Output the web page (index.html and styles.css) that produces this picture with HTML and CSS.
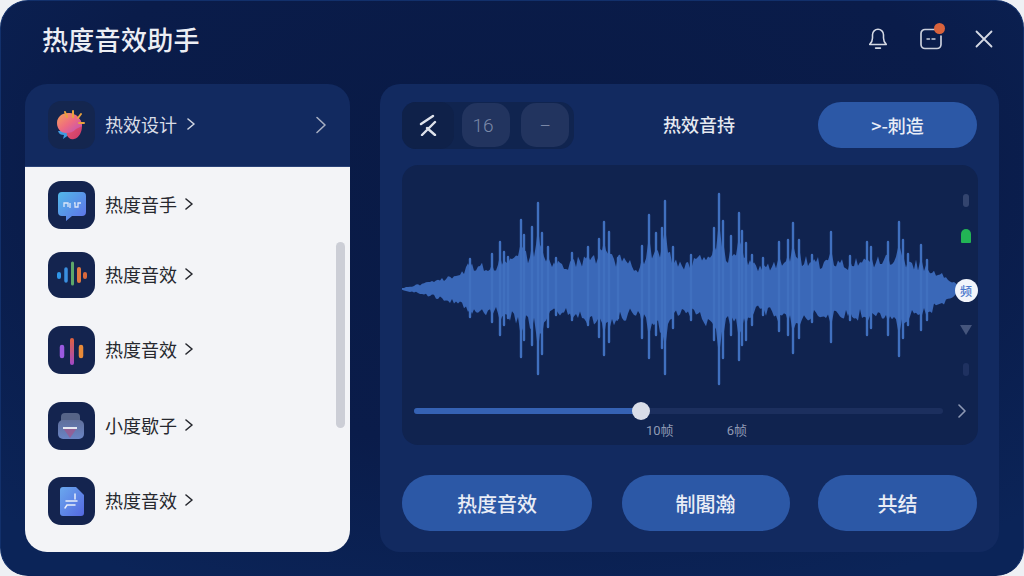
FILE: index.html
```html
<!DOCTYPE html>
<html lang="zh">
<head>
<meta charset="utf-8">
<title>热度音效助手</title>
<link rel="stylesheet" href="styles.css">
</head>
<body>
<div class="app">
  <header class="topbar">
    <h1 class="title">热度音效助手</h1>
    <div class="top-icons">
      <svg class="ti bell" viewBox="0 0 24 26" fill="none" stroke="#d5d9e4" stroke-width="1.7" stroke-linecap="round" stroke-linejoin="round"><path d="M3 20c2-2 3-3.500 3-7V9.500a6 6 0 0 1 12 0V13c0 3.500 1 5 3 7z"/><path d="M9.500 24h5" stroke-width="2"/></svg>
      <span class="msg">
        <svg class="ti" viewBox="0 0 24 22" fill="none" stroke="#c9cedb" stroke-width="1.7" stroke-linecap="round"><path d="M16 1.500H6a4 4 0 0 0-4 4v11a4 4 0 0 0 4 4h12a4 4 0 0 0 4-4V8"/><path d="M8 11h2.500M13 11h3" stroke-width="1.400"/></svg>
        <i class="dot"></i>
      </span>
      <svg class="ti close" viewBox="0 0 18 18" fill="none" stroke="#d5d9e4" stroke-width="1.800" stroke-linecap="round"><path d="M1.500 1.500l15 15M16.500 1.500l-15 15"/></svg>
    </div>
  </header>
  <main class="main">
    <aside class="side">
      <div class="side-head">
        <span class="ico ico-head">
          <svg viewBox="0 0 46 48" width="46" height="48">
            <defs>
              <linearGradient id="g1" x1="0" y1="0" x2="1" y2="1"><stop offset="0" stop-color="#f5a35a"/><stop offset=".5" stop-color="#ee6a80"/><stop offset="1" stop-color="#b94fc0"/></linearGradient>
              <linearGradient id="g2" x1="0" y1="0" x2="1" y2="1"><stop offset="0" stop-color="#ee5a70"/><stop offset="1" stop-color="#c83a6a"/></linearGradient>
            </defs>
            <path d="M10 30c1 3 3 4 6 4l-1 4 7-5-4-3z" fill="#3f9be0"/>
            <path d="M22 26c3-1 5-6 8-8 2-1 4 3 4 7 0 6-3 12-8 13-3 1-6-1-7-4-1-3 1-6 3-8z" fill="url(#g2)"/>
            <path d="M9 22c0-6 5-10 11-10 5 0 9 2 11 5 2 3 3 6 3 8l-6 3c-3 3-6 4-10 4-5 0-9-4-9-10z" fill="url(#g1)"/>
            <path d="M17 11l2 5M25 10v6M33 13l-3 4M36 22h-5" stroke="#e8a23c" stroke-width="2" stroke-linecap="round"/>
          </svg>
        </span>
        <span class="side-label">热效设计</span>
        <svg class="chev chev-sm head-chev light" viewBox="0 0 8 12"><path d="M1 1l6 5-6 5"/></svg>
        <svg class="chev chev-end" viewBox="0 0 12 18"><path d="M2 1.500l8 7.500-8 7.500"/></svg>
      </div>
      <ul class="list">
        <li class="row">
          <span class="ico">
            <svg viewBox="0 0 48 48" width="48" height="48">
              <defs><linearGradient id="g3" x1="0" y1="0" x2="1" y2="1"><stop offset="0" stop-color="#52b8e8"/><stop offset="1" stop-color="#5f6fe8"/></linearGradient></defs>
              <path d="M14 11h20a4 4 0 0 1 4 4v16a4 4 0 0 1-4 4H24l-6 5v-5h-4a4 4 0 0 1-4-4V15a4 4 0 0 1 4-4z" fill="url(#g3)"/>
              <path d="M16 26v-4h4v4M22 22v5M26 22h1v4h3v-4h3" fill="none" stroke="#dbe6f8" stroke-width="1.300"/>
            </svg>
          </span>
          <span class="row-label">热度音手</span>
          <svg class="chev chev-sm" viewBox="0 0 8 12"><path d="M1 1l6 5-6 5"/></svg>
        </li>
        <li class="row row-tight">
          <span class="ico">
            <svg viewBox="0 0 48 46" width="48" height="46" stroke-linecap="round" fill="none">
              <path d="M11 22v3" stroke="#2f96e8" stroke-width="4"/>
              <path d="M18 17v12" stroke="#3a8fe0" stroke-width="3.500"/>
              <path d="M24.500 11v21" stroke="#5ca86a" stroke-width="3"/>
              <path d="M31 17v12" stroke="#e07840" stroke-width="4"/>
              <path d="M37 22v3" stroke="#d8683c" stroke-width="4"/>
            </svg>
          </span>
          <span class="row-label">热度音效</span>
          <svg class="chev chev-sm" viewBox="0 0 8 12"><path d="M1 1l6 5-6 5"/></svg>
        </li>
        <li class="row">
          <span class="ico">
            <svg viewBox="0 0 48 48" width="48" height="48" stroke-linecap="round" fill="none">
              <defs><linearGradient id="g4" x1="0" y1="0" x2="0" y2="1"><stop offset="0" stop-color="#e0623c"/><stop offset="1" stop-color="#a048c8"/></linearGradient></defs>
              <path d="M14 21v9" stroke="#9a5ae0" stroke-width="4.500"/>
              <rect x="22" y="12" width="4" height="27" rx="2" fill="url(#g4)"/>
              <path d="M33 21v9" stroke="#e88a38" stroke-width="4.500"/>
            </svg>
          </span>
          <span class="row-label">热度音效</span>
          <svg class="chev chev-sm" viewBox="0 0 8 12"><path d="M1 1l6 5-6 5"/></svg>
        </li>
        <li class="row">
          <span class="ico">
            <svg viewBox="0 0 48 48" width="48" height="48">
              <defs><linearGradient id="g5" x1="0" y1="0" x2="0" y2="1"><stop offset="0" stop-color="#5f6f9c"/><stop offset="1" stop-color="#6a84c4"/></linearGradient></defs>
              <rect x="13" y="11" width="19" height="14" rx="4" fill="#566487"/>
              <rect x="10" y="18" width="26" height="19" rx="5" fill="url(#g5)"/>
              <path d="M15 26h14l-7 10z" fill="#a2558c" opacity=".7"/>
              <rect x="15" y="25" width="14" height="2" fill="#e4e8f2"/>
            </svg>
          </span>
          <span class="row-label">小度歇子</span>
          <svg class="chev chev-sm" viewBox="0 0 8 12"><path d="M1 1l6 5-6 5"/></svg>
        </li>
        <li class="row row-last">
          <span class="ico">
            <svg viewBox="0 0 48 48" width="48" height="48">
              <defs><linearGradient id="g6" x1="0" y1="0" x2="1" y2="1"><stop offset="0" stop-color="#6aa8ee"/><stop offset="1" stop-color="#5468e0"/></linearGradient></defs>
              <path d="M15 10h13l8 8v18a3 3 0 0 1-3 3H15a3 3 0 0 1-3-3V13a3 3 0 0 1 3-3z" fill="url(#g6)"/>
              <path d="M18 24h11M17 31l2-3h8M27 17v5" stroke="#e8eefa" stroke-width="1.500" fill="none" stroke-linecap="round"/>
            </svg>
          </span>
          <span class="row-label">热度音效</span>
          <svg class="chev chev-sm" viewBox="0 0 8 12"><path d="M1 1l6 5-6 5"/></svg>
        </li>
      </ul>
      <div class="scrollbar"></div>
    </aside>
    <section class="panel">
      <div class="toolbar">
        <div class="seg">
          <span class="seg-a">
            <svg viewBox="0 0 18 22" width="18" height="22" fill="none" stroke="#dfe3ec" stroke-width="2.400" stroke-linecap="round"><path d="M14 2L2 10M16 8L3 21M8 14l8 7"/></svg>
          </span>
          <span class="seg-b">16</span>
          <span class="seg-c">—</span>
        </div>
        <div class="tool-title">热效音持</div>
        <button class="pill pill-top">&gt;-刺造</button>
      </div>
      <div class="wavebox">
        <svg id="wave" class="wave" viewBox="0 0 576 230" width="576" height="230"></svg>
        <div class="markers">
          <i class="m-pill"></i>
          <i class="m-green"></i>
          <b class="m-knob">频</b>
          <i class="m-tri"></i>
          <i class="m-pill dim"></i>
        </div>
        <div class="slider-row">
          <div class="track"><div class="fill"><i class="thumb"></i></div></div>
          <svg class="chev chev-slide" viewBox="0 0 8 14"><path d="M1 1l6 6-6 6"/></svg>
        </div>
        <div class="times"><span>10帧</span><span>6帧</span></div>
      </div>
      <div class="actions">
        <button class="pill act-a">热度音效</button>
        <button class="pill act-b">制閣瀚</button>
        <button class="pill act-c">共结</button>
      </div>
    </section>
  </main>
</div>
<script src="wave.js"></script>
</body>
</html>
```
FILE: styles.css
```css
* { box-sizing: border-box; }
html, body { margin: 0; height: 100%; }
body {
  width: 1024px;
  height: 576px;
  overflow: hidden;
  background: #eef0f4;
  font-family: "Noto Sans CJK SC", "Noto Sans", sans-serif;
}
.app {
  width: 1024px;
  height: 576px;
  border-radius: 28px;
  border: 1px solid #12306b;
  border-bottom-color: #0a2258;
  background: radial-gradient(ellipse 75% 80% at 50% 30%, #091a45 0%, #0a1c4a 60%, #0b2458 100%);
  display: flex;
  flex-direction: column;
  overflow: hidden;
}
.topbar {
  height: 83px;
  flex: none;
  display: flex;
  align-items: center;
  justify-content: space-between;
  padding: 0 30px 7px 41px;
}
.title {
  margin: 0;
  font-size: 26px;
  line-height: 36px;
  font-weight: 500;
  color: #eceef4;
  letter-spacing: .3px;
}
.top-icons { display: flex; align-items: center; gap: 32px; }
.ti { display: block; }
.bell { width: 22px; height: 24px; margin-top: -2px; margin-right: -2px; }
.msg { position: relative; display: block; width: 24px; height: 22px; }
.msg .ti { width: 24px; height: 22px; }
.dot {
  position: absolute;
  right: -2px;
  top: -5px;
  width: 11px;
  height: 11px;
  border-radius: 50%;
  background: #d9633c;
}
.close { width: 18px; height: 18px; }

.main {
  flex: 1;
  display: flex;
  gap: 30px;
  padding: 0 24px 23px 24px;
  min-height: 0;
}
.side {
  position: relative;
  width: 325px;
  flex: none;
  border-radius: 22px;
  overflow: hidden;
  display: flex;
  flex-direction: column;
}
.side-head {
  height: 83px;
  flex: none;
  background: #122a60;
  display: flex;
  align-items: center;
  padding: 0 23px;
  border-bottom: 1px solid #2a4277;
}
.ico {
  width: 47px;
  height: 48px;
  flex: none;
  border-radius: 13px;
  background: #14244f;
  display: block;
  overflow: hidden;
}
.ico svg { display: block; }
.ico-head { background: #14264f; }
.side-label { margin-left: 10px; margin-top: -2px; font-size: 18px; line-height: 26px; color: #d9dde6; }
.chev { fill: none; stroke: #26282e; stroke-width: 1.600; stroke-linecap: round; stroke-linejoin: round; display: block; flex: none; }
.chev-sm { width: 8px; height: 12px; margin-left: 8px; margin-top: -2px; }
.head-chev { margin-left: 10px; }
.chev.light { stroke: #cfd4e0; }
.chev-end { width: 12px; height: 18px; margin-left: auto; stroke: #a6aec2; margin-top: -1px; }

.list {
  list-style: none;
  margin: 0;
  padding: 14px 23px 0;
  flex: 1;
  background: #f3f4f7;
  display: flex;
  flex-direction: column;
  gap: 28px;
}
.row { display: flex; align-items: center; height: 48px; }
.row-tight { margin-top: -5px; height: 46px; }
.row-tight .ico { height: 46px; }
.row-last { margin-top: -1px; }
.row-label { margin-left: 10px; margin-top: -2px; font-size: 18px; line-height: 26px; color: #26282e; }
.scrollbar {
  position: absolute;
  right: 5px;
  top: 158px;
  width: 9px;
  height: 186px;
  border-radius: 5px;
  background: #ccced6;
}

.panel {
  flex: 1;
  border-radius: 20px;
  background: #122a60;
  padding: 18px 21px 21px 22px;
  display: flex;
  flex-direction: column;
}
.toolbar { display: flex; align-items: center; height: 46px; flex: none; padding-right: 1px; }
.seg {
  width: 172px;
  height: 47px;
  border-radius: 14px;
  background: #10244f;
  display: flex;
  align-items: center;
  flex: none;
}
.seg-a {
  width: 52px;
  height: 47px;
  border-radius: 14px;
  background: #0f2149;
  display: flex;
  align-items: center;
  justify-content: center;
}
.seg-b, .seg-c {
  width: 48px;
  height: 44px;
  border-radius: 15px;
  background: #22345f;
  color: #7a88a8;
  font-family: "Roboto", sans-serif;
  display: flex;
  align-items: center;
  justify-content: center;
}
.seg-b { margin-left: 8px; padding-right: 6px; font-size: 19px; font-weight: 300; }
.seg-c { margin-left: 11px; font-size: 13px; }
.tool-title { flex: 1; text-align: center; font-size: 18px; line-height: 26px; font-weight: 500; color: #e6e9f0; padding-left: 6px; margin-top: -2px; }
.pill {
  border: 0;
  margin: 0;
  padding: 0;
  background: #2c58a6;
  color: #e9edf6;
  font-family: inherit;
  font-weight: 500;
  display: block;
  flex: none;
}
.pill-top { width: 159px; height: 46px; border-radius: 23px; font-size: 18px; }
.wavebox {
  position: relative;
  margin-top: 17px;
  height: 280px;
  flex: none;
  border-radius: 16px;
  background: #10234f;
}
.wave { display: block; filter: blur(.4px); }
.markers {
  position: absolute;
  right: 0;
  top: 29px;
  width: 24px;
  display: flex;
  flex-direction: column;
  align-items: center;
}
.m-pill { width: 6px; height: 13px; border-radius: 3px; background: #33446e; display: block; }
.m-pill.dim { background: #1f3160; margin-top: 28px; }
.m-green { width: 10px; height: 14px; border-radius: 5px 5px 1px 1px; background: #22b455; display: block; margin-top: 22px; }
.m-knob {
  width: 23px;
  height: 23px;
  border-radius: 50%;
  background: #f2f5fb;
  color: #4a78cc;
  font-size: 12px;
  line-height: 23px;
  font-weight: 500;
  text-align: center;
  display: block;
  margin-top: 36px;
}
.m-tri {
  width: 0;
  height: 0;
  border-left: 6px solid transparent;
  border-right: 6px solid transparent;
  border-top: 10px solid #45557c;
  display: block;
  margin-top: 23px;
}
.slider-row {
  display: flex;
  align-items: center;
  padding-left: 12px;
  margin-top: 9px;
  height: 14px;
}
.track { width: 529px; height: 6px; border-radius: 3px; background: #1c2f5e; }
.fill { position: relative; width: 227px; height: 6px; border-radius: 3px; background: #3562b4; }
.thumb {
  position: absolute;
  right: -9px;
  top: -6px;
  width: 18px;
  height: 18px;
  border-radius: 50%;
  background: #d9dde8;
  display: block;
}
.chev-slide { width: 8px; height: 14px; margin-left: 15px; stroke: #8e99b4; }
.times {
  display: flex;
  gap: 53px;
  padding-left: 244px;
  margin-top: 4px;
  font-family: "Roboto", "Noto Sans CJK SC", sans-serif;
  font-size: 13px;
  line-height: 18px;
  color: #8f9ab4;
}
.actions { display: flex; justify-content: space-between; margin-top: 30px; padding-right: 1px; }
.actions .pill { height: 56px; border-radius: 28px; font-size: 20px; }
.act-a { width: 190px; }
.act-b { width: 168px; margin-left: 1px; }
.act-c { width: 159px; }
```
FILE: wave.js
```js
// Waveform drawn from measured peaks: [x, topY, bottomY] in page pixels.
(function () {
  var PEAKS = [
    [470,259,317],[492,254,322],[500,242,335],[504,252,325],[508,257,318],[521,220,357],[524,235,340],
    [532,227,345],[538,203,374],[542,233,354],[548,247,327],[556,258,315],[572,253,320],[588,247,325],
    [599,239,337],[604,222,355],[609,232,342],[618,258,318],[642,246,338],[649,215,358],[656,233,335],
    [662,228,348],[665,201,374],[673,247,328],[691,255,320],[714,228,340],[719,194,384],[723,221,358],
    [731,236,335],[739,213,360],[742,231,345],[746,243,340],[752,255,325],[763,258,315],[779,242,331],
    [788,240,335],[793,223,353],[799,240,338],[812,255,322],[831,232,342],[850,256,320],[867,242,335],
    [871,247,328],[888,242,335],[899,222,356],[903,240,338],[908,254,325],[921,245,330],[927,260,320]
  ];
  var ENV = [
    [402,1],[420,5],[445,11],[460,17],[468,24],[500,25],[530,38],[560,25],[600,38],[630,28],[642,22],
    [662,42],[682,24],[720,40],[760,22],[792,36],[830,26],[900,33],[932,22],[950,10],[958,4]
  ];
  var OX = 402, OY = 165, CY = 289;
  function env(x) {
    for (var i = 1; i < ENV.length; i++) {
      if (x <= ENV[i][0]) {
        var a = ENV[i - 1], b = ENV[i];
        return a[1] + (b[1] - a[1]) * (x - a[0]) / (b[0] - a[0]);
      }
    }
    return 3;
  }
  function noise(x, k) {
    var v = Math.sin(x * 12.9898 + k * 78.233) * 43758.5453;
    return v - Math.floor(v);
  }
  var upper = [], lower = [];
  for (var x = 402; x <= 958; x += 2) {
    var e = env(x);
    var u = e * (0.68 + 0.42 * noise(x, 1));
    var d = e * (0.68 + 0.42 * noise(x, 2));
    PEAKS.forEach(function (p) {
      var dist = Math.abs(p[0] - x);
      if (dist < 7) {
        u = Math.max(u, (CY - p[1]) * 0.72 * (1 - dist / 7));
        d = Math.max(d, (p[2] - CY) * 0.72 * (1 - dist / 7));
      }
    });
    upper.push((x - OX) + "," + (CY - OY - u).toFixed(1));
    lower.unshift((x - OX) + "," + (CY - OY + d).toFixed(1));
  }
  var NS = "http://www.w3.org/2000/svg";
  var svg = document.getElementById("wave");
  var body = document.createElementNS(NS, "polygon");
  body.setAttribute("points", upper.concat(lower).join(" "));
  body.setAttribute("fill", "#3a68b8");
  svg.appendChild(body);
  PEAKS.forEach(function (p) {
    var l = document.createElementNS(NS, "line");
    l.setAttribute("x1", p[0] - OX);
    l.setAttribute("x2", p[0] - OX);
    l.setAttribute("y1", p[1] - OY);
    l.setAttribute("y2", p[2] - OY);
    l.setAttribute("stroke", "#4070bf");
    l.setAttribute("stroke-width", "2.400");
    l.setAttribute("stroke-linecap", "round");
    svg.appendChild(l);
  });
})();
```
